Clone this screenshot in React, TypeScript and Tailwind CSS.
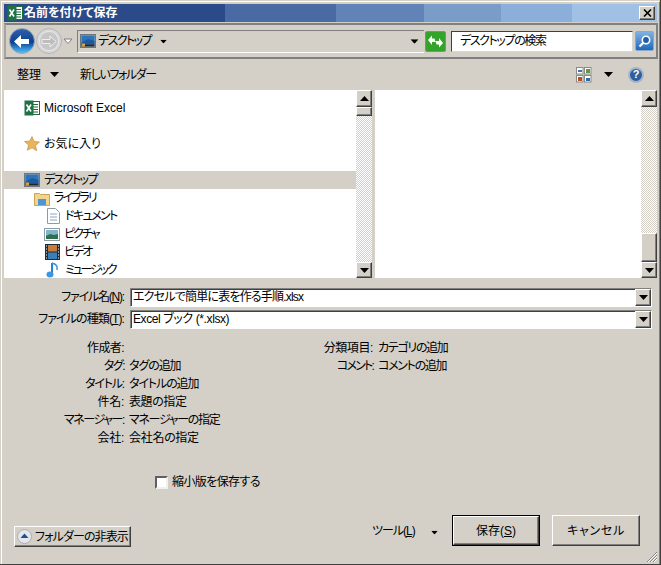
import React from "react";

const font = { fontFamily: '"Liberation Sans", "Noto Sans CJK JP", sans-serif' };

function Raised({ className = "", children }: { className?: string; children?: React.ReactNode }) {
  return (
    <div className={`flex items-center justify-center bg-[#d4d0c8] border border-t-white border-l-white border-r-[#404040] border-b-[#404040] shadow-[inset_-1px_-1px_0_#808080] ${className}`}>
      {children}
    </div>
  );
}

function Tri({ down = true, className = "" }: { down?: boolean; className?: string }) {
  return (
    <svg width="9" height="5" viewBox="0 0 9 5" className={`shrink-0 ${className}`}>
      <path d={down ? "M0 0H9L4.5 5Z" : "M0 5H9L4.5 0Z"} fill="#000" />
    </svg>
  );
}

function ExcelIcon({ size = 16 }: { size?: number }) {
  return (
    <svg width={size} height={size} viewBox="0 0 16 16" className="shrink-0">
      <rect x="7" y="1.5" width="8.5" height="13" fill="#fff" stroke="#1f6b3f" />
      <path d="M9 4.5h5M9 7h5M9 9.5h5M9 12h5" stroke="#1f6b3f" />
      <rect x="0.5" y="0.5" width="9" height="15" fill="#1f7244" />
      <path d="M2.5 4.5 7 11.5M7 4.5 2.5 11.5" stroke="#fff" strokeWidth="1.6" />
    </svg>
  );
}

function DesktopIcon() {
  return (
    <svg width="16" height="14" viewBox="0 0 16 14" className="shrink-0">
      <rect x="0.5" y="0.5" width="15" height="13" fill="#9aa4ad" stroke="#6b7680" />
      <rect x="1.5" y="1.5" width="13" height="9" fill="#2e74bb" />
      <path d="M1.5 8.5 8 5l6.5 2v3.5h-13Z" fill="#1d5a9c" />
      <rect x="1.5" y="10.5" width="13" height="2" fill="#22262a" />
      <rect x="2" y="9.5" width="3" height="3" fill="#d8a13a" />
    </svg>
  );
}

function ScrollBar({ thumbTop, className = "" }: { thumbTop?: boolean; className?: string }) {
  return (
    <div className={`flex flex-col shrink-0 w-[16px] h-full bg-[repeating-conic-gradient(#d4d0c8_0_25%,#ffffff_0_50%)] bg-[length:2px_2px] ${className}`}>
      <Raised className="h-[17px] w-full shrink-0"><Tri down={false} /></Raised>
      {thumbTop && <Raised className="h-[9px] w-full shrink-0" />}
      <div className="flex-1" />
      {!thumbTop && <Raised className="h-[29px] w-full shrink-0" />}
      <Raised className="h-[16px] w-full shrink-0"><Tri /></Raised>
    </div>
  );
}

function TreeRow({ icon, label, indent, track = "", selected }: { icon: React.ReactNode; label: string; indent: string; track?: string; selected?: boolean }) {
  return (
    <div className={`flex items-center h-[18px] gap-[4px] ${indent} ${selected ? "bg-[#d4d0c8]" : ""}`}>
      <div className="w-[16px] h-[16px] flex items-center justify-center shrink-0">{icon}</div>
      <span className={track}>{label}</span>
    </div>
  );
}

function Combo({ children, label, track, labelTrack }: { children: React.ReactNode; label: React.ReactNode; track: string; labelTrack: string }) {
  return (
    <div className="flex items-center h-[22px]">
      <div className={`w-[123px] text-right shrink-0 whitespace-nowrap ${labelTrack}`}>{label}</div>
      <div className="ml-[6px] w-[522px] h-[19px] flex items-stretch bg-white border border-t-[#808080] border-l-[#808080] border-r-white border-b-white shadow-[inset_1px_1px_0_#404040]">
        <div className={`flex-1 pl-[2px] leading-[17px] whitespace-nowrap overflow-hidden ${track}`}>{children}</div>
        <Raised className="w-[16px] h-[17px] shrink-0"><Tri /></Raised>
      </div>
    </div>
  );
}

function Meta({ k, v, kt = "", vt = "" }: { k: string; v?: string; kt?: string; vt?: string }) {
  return (
    <div className="flex h-[18px] items-center whitespace-nowrap">
      <div className={`w-[123px] text-right shrink-0 ${kt}`}>{k}:</div>
      <div className={`ml-[5px] ${vt}`}>{v}</div>
    </div>
  );
}

export default function App() {
  return (
    <div style={font} className="w-[661px] h-[565px] bg-[#d4d0c8] text-[12px] leading-none text-black overflow-hidden border-r border-b border-r-[#404040] border-b-[#404040] relative [font-feature-settings:'palt']">
      <div className="h-full border-l border-t border-l-white border-t-white ml-[1px] mt-[1px] pl-[2px] pr-[2px] pt-[2px] flex flex-col border-r border-r-[#808080] border-b border-b-[#808080]">
        {/* Title */}
        <div className="h-[18px] w-[653px] flex items-stretch relative text-white font-bold shrink-0">
          <div className="w-[221px] bg-[#2a4a89]" />
          <div className="w-[111px] bg-[#4a6aa3]" />
          <div className="w-[88px] bg-[#6283b8]" />
          <div className="w-[77px] bg-[#7a9cc8]" />
          <div className="w-[71px] bg-[#8caedb]" />
          <div className="flex-1 bg-[#a0c0e5]" />
          <div className="absolute inset-0 flex items-center pl-[3px] gap-[1px]">
            <ExcelIcon size={16} />
            <span className="text-[12px]">名前を付けて保存</span>
          </div>
          <Raised className="absolute right-[2px] top-[2px] w-[16px] h-[14px]">
            <svg width="9" height="8" viewBox="0 0 9 8"><path d="M1 0.5 8 7.5M8 0.5 1 7.5" stroke="#000" strokeWidth="1.6" /></svg>
          </Raised>
        </div>
        {/* Nav */}
        <div className="h-[36px] w-[654px] mt-[1px] border-2 border-t-[#808080] border-l-[#a8a49c] border-r-[#808080] border-b-[#808080] flex items-center pl-[2px] shrink-0">
          <svg width="68" height="28" viewBox="0 0 68 28" className="shrink-0">
            <defs>
              <linearGradient id="bk" x1="0" y1="0" x2="0" y2="1">
                <stop offset="0" stopColor="#2f63ad" />
                <stop offset="0.55" stopColor="#0f3f8e" />
                <stop offset="0.8" stopColor="#2f8fd8" />
                <stop offset="1" stopColor="#5fc0ee" />
              </linearGradient>
            </defs>
            <circle cx="14" cy="14" r="12.5" fill="url(#bk)" stroke="#98a8b8" />
            <path d="M6 14.5l7-6.5v4h8v5h-8v4Z" fill="#fff" />
            <circle cx="41" cy="14" r="12.5" fill="#d8d8d8" stroke="#b4b4b4" />
            <circle cx="41" cy="14" r="9.5" fill="#c6c6c6" stroke="#e8e8e8" />
            <path d="M48 14.5l-6-5.5v3.5h-8v4h8v3.5Z" fill="#bdbdbd" stroke="#eee" />
            <path d="M56 12h8l-4 4.5Z" fill="#fff" stroke="#7f7f7f" />
          </svg>
          <div className="ml-[1px] w-[347px] h-[23px] flex items-center border border-t-[#808080] border-l-[#808080] border-b-white border-r-0 pl-[2px]">
            <DesktopIcon />
            <span className="ml-[2px] tracking-[-1.6px]">デスクトップ</span>
            <Tri className="ml-[8px] scale-75" />
            <Tri className="ml-auto mr-[5px] scale-90" />
          </div>
          <div className="ml-[1px] w-[21px] h-[21px] flex items-center justify-center bg-[#34a32a] border border-[#8a8a8a] rounded-[2px] shrink-0">
            <svg width="17" height="15" viewBox="0 0 17 15">
              <path d="M1 6l4-4.5v3h2.5l1 3.500H5V11ZM16 9l-4 4.500v-3H9.500L8.500 7H12V4Z" fill="#fff" />
            </svg>
          </div>
          <div className="ml-[5px] w-[182px] h-[21px] bg-white border border-t-[#404040] border-l-[#404040] border-b-[#d8d8d8] border-r-[#d8d8d8] pl-[8px] flex items-center shrink-0 tracking-[-1.4px]">デスクトップの検索</div>
          <div className="ml-[2px] w-[19px] h-[20px] rounded-[2px] bg-linear-to-b from-[#7fb2e2] to-[#1c68b8] border border-[#8aa8c8] flex items-center justify-center shrink-0">
            <svg width="15" height="15" viewBox="0 0 15 15">
              <circle cx="9" cy="6" r="3.7" fill="#1f5fa8" stroke="#fff" strokeWidth="1.6" />
              <path d="M6.300 8.700 2.500 12.500" stroke="#fff" strokeWidth="2.200" />
            </svg>
          </div>
        </div>
        {/* Command bar */}
        <div className="h-[31px] w-[653px] flex items-center pl-[13px] pr-[13px] shrink-0">
          <span>整理</span>
          <Tri className="ml-[9px]" />
          <span className="ml-[21px] tracking-[-1.4px]">新しいフォルダー</span>
          <svg width="16" height="16" viewBox="0 0 16 16" className="ml-auto">
            <rect x="0.5" y="0.5" width="6.5" height="6.5" fill="#fff" stroke="#8a8a8a" /><rect x="2" y="3" width="4" height="2" fill="#3b78b0" />
            <rect x="8.5" y="0.5" width="6.5" height="6.5" fill="#fff" stroke="#8a8a8a" /><rect x="10" y="2" width="4" height="4" fill="#5c9a3a" />
            <rect x="0.5" y="8.5" width="6.5" height="6.5" fill="#fff" stroke="#8a8a8a" /><rect x="2" y="10" width="4" height="4" fill="#b5501f" />
            <rect x="8.5" y="8.5" width="6.5" height="6.5" fill="#fff" stroke="#8a8a8a" /><rect x="10" y="11" width="4" height="3" fill="#2d6aa5" />
          </svg>
          <Tri className="ml-[12px]" />
          <div className="ml-[15px] w-[16px] h-[16px] rounded-full bg-[#2f5f9f] border-2 border-[#a5b5c8] text-white font-bold text-[11px] flex items-center justify-center">?</div>
        </div>
        {/* Panes */}
        <div className="h-[188px] w-[653px] flex shrink-0">
          <div className="w-[352px] h-full bg-white overflow-hidden pt-[9px]">
            <TreeRow indent="pl-[20px]" icon={<ExcelIcon />} label="Microsoft Excel" />
            <div className="h-[18px]" />
            <TreeRow indent="pl-[20px]" icon={
              <svg width="16" height="16" viewBox="0 0 16 16"><path d="M8 .5l2.200 5 5.300.5-4 3.500 1.200 5.300L8 11.800l-4.700 2.500 1.200-5.300-4-3.500 5.300-.5Z" fill="#e9b45c" stroke="#b8863a" strokeWidth=".6" /></svg>
            } label="お気に入り" />
            <div className="h-[18px]" />
            <TreeRow indent="pl-[20px]" selected track="tracking-[-1.6px]" icon={<DesktopIcon />} label="デスクトップ" />
            <TreeRow indent="pl-[30px]" track="tracking-[-2px]" icon={
              <svg width="16" height="15" viewBox="0 0 16 15"><path d="M.5 2.500h5l1 1h9v11H.5Z" fill="#f1d58e" stroke="#c7a45a" /><rect x="4" y="8" width="8" height="6" fill="#4f96d6" /></svg>
            } label="ライブラリ" />
            <TreeRow indent="pl-[41px]" track="tracking-[-1.6px]" icon={
              <svg width="13" height="16" viewBox="0 0 13 16"><path d="M.5.5h8l4 4v11H.5Z" fill="#fff" stroke="#8f9aa5" /><path d="M3 6h7M3 9h7M3 12h7" stroke="#8aa4c0" /></svg>
            } label="ドキュメント" />
            <TreeRow indent="pl-[40px]" track="tracking-[-2px]" icon={
              <svg width="16" height="13" viewBox="0 0 16 13"><rect x=".5" y=".5" width="15" height="12" fill="#fff" stroke="#8f9aa5" /><rect x="2" y="2" width="12" height="9" fill="#7fb6c8" /><path d="M2 8l4-2 4 1 4-1v5H2Z" fill="#2f6e4e" /></svg>
            } label="ピクチャ" />
            <TreeRow indent="pl-[40px]" track="tracking-[-2px]" icon={
              <svg width="15" height="16" viewBox="0 0 15 16"><rect width="15" height="16" fill="#1d2c3c" /><rect x="3" y="1" width="9" height="6.500" fill="#c97b3a" /><rect x="3" y="8.500" width="9" height="6.500" fill="#3a7fb8" /><path d="M1 2h1M1 5h1M1 8h1M1 11h1M1 14h1M13 2h1M13 5h1M13 8h1M13 11h1M13 14h1" stroke="#fff" /></svg>
            } label="ビデオ" />
            <TreeRow indent="pl-[41px]" track="tracking-[-2.2px]" icon={
              <svg width="14" height="16" viewBox="0 0 14 16"><path d="M6 1v10.500" stroke="#2a7fd0" strokeWidth="2" /><ellipse cx="4" cy="12.500" rx="3.500" ry="3" fill="#3d96e0" /><path d="M6 1c4 1 6 3 5 7" stroke="#3d96e0" strokeWidth="1.600" fill="none" /></svg>
            } label="ミュージック" />
          </div>
          <ScrollBar thumbTop />
          <div className="w-[3px]" />
          <div className="w-[266px] h-full bg-white" />
          <ScrollBar />
        </div>
        {/* Form */}
        <div className="mt-[8px] flex flex-col shrink-0 -ml-[3px]">
          <Combo labelTrack="tracking-[-1.2px]" track="tracking-[-0.8px]" label={<>ファイル名(<span className="underline">N</span>):</>}>エクセルで簡単に表を作る手順.xlsx</Combo>
          <Combo labelTrack="tracking-[-0.9px]" track="tracking-[-0.4px]" label={<>ファイルの種類(<span className="underline">T</span>):</>}>Excel ブック (*.xlsx)</Combo>
        </div>
        {/* Metadata */}
        <div className="mt-[9px] flex -ml-[3px] shrink-0">
          <div className="w-[249px] flex flex-col">
            <Meta k="作成者" kt="tracking-[-0.6px]" />
            <Meta k="タグ" kt="tracking-[-1.5px]" v="タグの追加" vt="tracking-[-1.1px]" />
            <Meta k="タイトル" kt="tracking-[-1.2px]" v="タイトルの追加" vt="tracking-[-1.1px]" />
            <Meta k="件名" kt="tracking-[-0.3px]" v="表題の指定" vt="tracking-[-0.4px]" />
            <Meta k="マネージャー" kt="tracking-[-1.4px]" v="マネージャーの指定" vt="tracking-[-1.3px]" />
            <Meta k="会社" kt="tracking-[-0.3px]" v="会社名の指定" vt="tracking-[-0.3px]" />
          </div>
          <div className="flex flex-col">
            <Meta k="分類項目" kt="tracking-[-0.4px]" v="カテゴリの追加" vt="tracking-[-1.3px]" />
            <Meta k="コメント" kt="tracking-[-1.8px]" v="コメントの追加" vt="tracking-[-1.3px]" />
          </div>
        </div>
        {/* Checkbox */}
        <div className="mt-[28px] ml-[151px] flex items-center h-[14px] shrink-0">
          <div className="w-[13px] h-[13px] bg-white border-2 border-t-[#606060] border-l-[#606060] border-r-[#f0f0f0] border-b-[#f0f0f0]" />
          <span className="ml-[4px] tracking-[-0.6px]">縮小版を保存する</span>
        </div>
        {/* Footer */}
        <div className="mt-[26px] flex items-start pl-[10px] shrink-0">
          <Raised className="mt-[11px] w-[117px] h-[21px] justify-start! pl-[2px] gap-[3px] whitespace-nowrap">
            <svg width="15" height="15" viewBox="0 0 15 15" className="shrink-0"><circle cx="7.500" cy="7.500" r="7" fill="#e4e6e8" stroke="#a8aeb5" /><path d="M3.500 9 7.500 4.500 11.500 9Z" fill="#1f4f9a" /></svg>
            <span className="tracking-[-0.9px]">フォルダーの非表示</span>
          </Raised>
          <span className="ml-[241px] mt-[10px] w-[44px] whitespace-nowrap tracking-[-1px]">ツール(<span className="underline">L</span>)</span>
          <Tri className="ml-[14px] mt-[15px] scale-75" />
          <div className="ml-[13px] w-[88px] h-[31px] border border-black shrink-0">
            <Raised className="w-full h-full">保存(<span className="underline">S</span>)</Raised>
          </div>
          <Raised className="ml-[12px] w-[88px] h-[31px] shrink-0 tracking-[0.7px]">キャンセル</Raised>
        </div>
      </div>
      <svg width="12" height="12" viewBox="0 0 12 12" className="absolute right-[2px] bottom-[1px]">
        <path d="M11 1 1 11M11 4 4 11M11 7 7 11" stroke="#808080" />
        <path d="M11 2 2 11M11 5 5 11M11 8 8 11" stroke="#fff" />
      </svg>
    </div>
  );
}
